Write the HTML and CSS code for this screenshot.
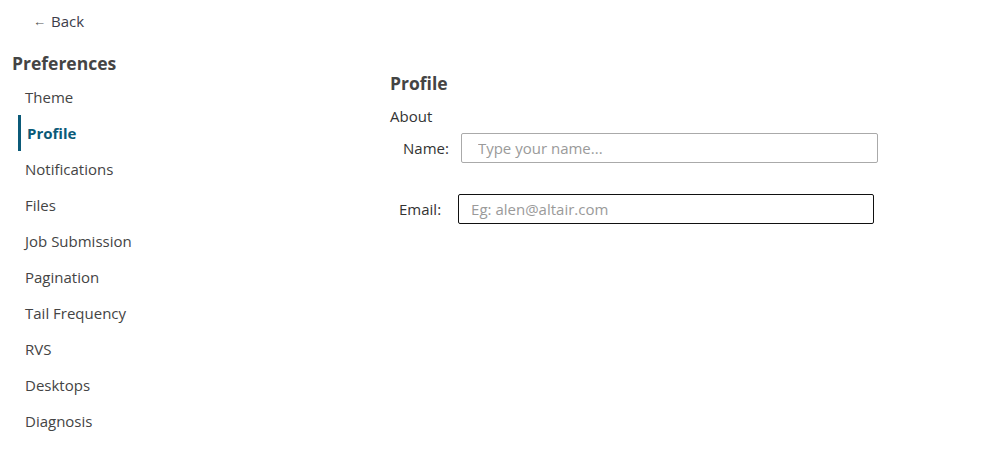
FILE: index.html
```html
<!DOCTYPE html>
<html lang="en">
<head>
    <meta charset="UTF-8">
    <meta name="viewport" content="width=device-width, initial-scale=1.0">
    <title>Preferences</title>
    <link rel="stylesheet" href="styles.css">
</head>
<body>

    <!-- Back link -->
    <div class="back-row">
        <a class="back-link" href="#"><span class="back-arrow">&larr;</span>Back</a>
    </div>

    <div class="layout">
        <!-- Sidebar -->
        <aside class="sidebar">
            <h2 class="sidebar-title">Preferences</h2>
            <ul class="nav">
                <li class="nav-item">Theme</li>
                <li class="nav-item active">Profile</li>
                <li class="nav-item">Notifications</li>
                <li class="nav-item">Files</li>
                <li class="nav-item">Job Submission</li>
                <li class="nav-item">Pagination</li>
                <li class="nav-item">Tail Frequency</li>
                <li class="nav-item">RVS</li>
                <li class="nav-item">Desktops</li>
                <li class="nav-item">Diagnosis</li>
            </ul>
        </aside>

        <!-- Profile panel -->
        <main class="panel">
            <h2 class="panel-title">Profile</h2>
            <div class="section-title">About</div>

            <div class="field field-name">
                <label for="name">Name:</label>
                <input type="text" id="name" class="input-name" placeholder="Type your name...">
            </div>

            <div class="field field-email">
                <label for="email">Email:</label>
                <input type="text" id="email" class="input-email" placeholder="Eg: alen@altair.com">
            </div>
        </main>
    </div>

</body>
</html>
```

FILE: styles.css
```css
html, body {
    margin: 0;
    padding: 0;
    background-color: #ffffff;
    font-family: "Open Sans", "Noto Sans", Arial, sans-serif;
    color: #333333;
}

.back-row {
    padding: 11px 0 0 33px;
    line-height: 20px;
}

.back-link {
    font-size: 15px;
    color: #3d3d4a;
    text-decoration: none;
}

.back-arrow {
    display: inline-block;
    font-size: 13px;
    margin-right: 5px;
    color: #555555;
    vertical-align: 1px;
}

.layout {
    display: flex;
}

/* Sidebar */
.sidebar {
    width: 378px;
    padding-left: 12px;
    flex-shrink: 0;
}

.sidebar-title {
    margin: 20px 0 4px;
    font-size: 17.5px;
    line-height: 24px;
    font-weight: 700;
    color: #444444;
}

.nav {
    list-style: none;
    margin: 0;
    padding: 0;
}

.nav-item {
    margin-left: 6px;
    height: 36px;
    line-height: 36px;
    padding-left: 4px;
    border-left: 3px solid transparent;
    font-size: 15px;
    color: #444444;
}

.nav-item.active {
    border-left-color: #0b5a78;
    padding-left: 6px;
    font-weight: 700;
    color: #0b5a78;
}

/* Panel */
.panel {
    flex: 1;
}

.panel-title {
    margin: 40px 0 11px;
    font-size: 17.5px;
    line-height: 24px;
    font-weight: 700;
    color: #444444;
}

.section-title {
    font-size: 15px;
    line-height: 20px;
    color: #333333;
    margin-bottom: 7px;
}

.field {
    display: flex;
    align-items: center;
    font-size: 15px;
}

.field label {
    color: #333333;
}

.field input {
    box-sizing: border-box;
    height: 30px;
    font-family: inherit;
    font-size: 15px;
    color: #333333;
    outline: none;
}

.field input::placeholder {
    color: #9a9a9a;
}

.field-name {
    padding-left: 13px;
    gap: 12px;
}

.input-name {
    width: 417px;
    border: 1px solid #aaaaaa;
    border-radius: 2px;
    padding: 0 16px;
}

.field-email {
    margin-top: 31px;
    padding-left: 9px;
    gap: 17px;
}

.input-email {
    width: 416px;
    border: 1px solid #111111;
    border-radius: 2px;
    padding: 0 12px;
}
```
